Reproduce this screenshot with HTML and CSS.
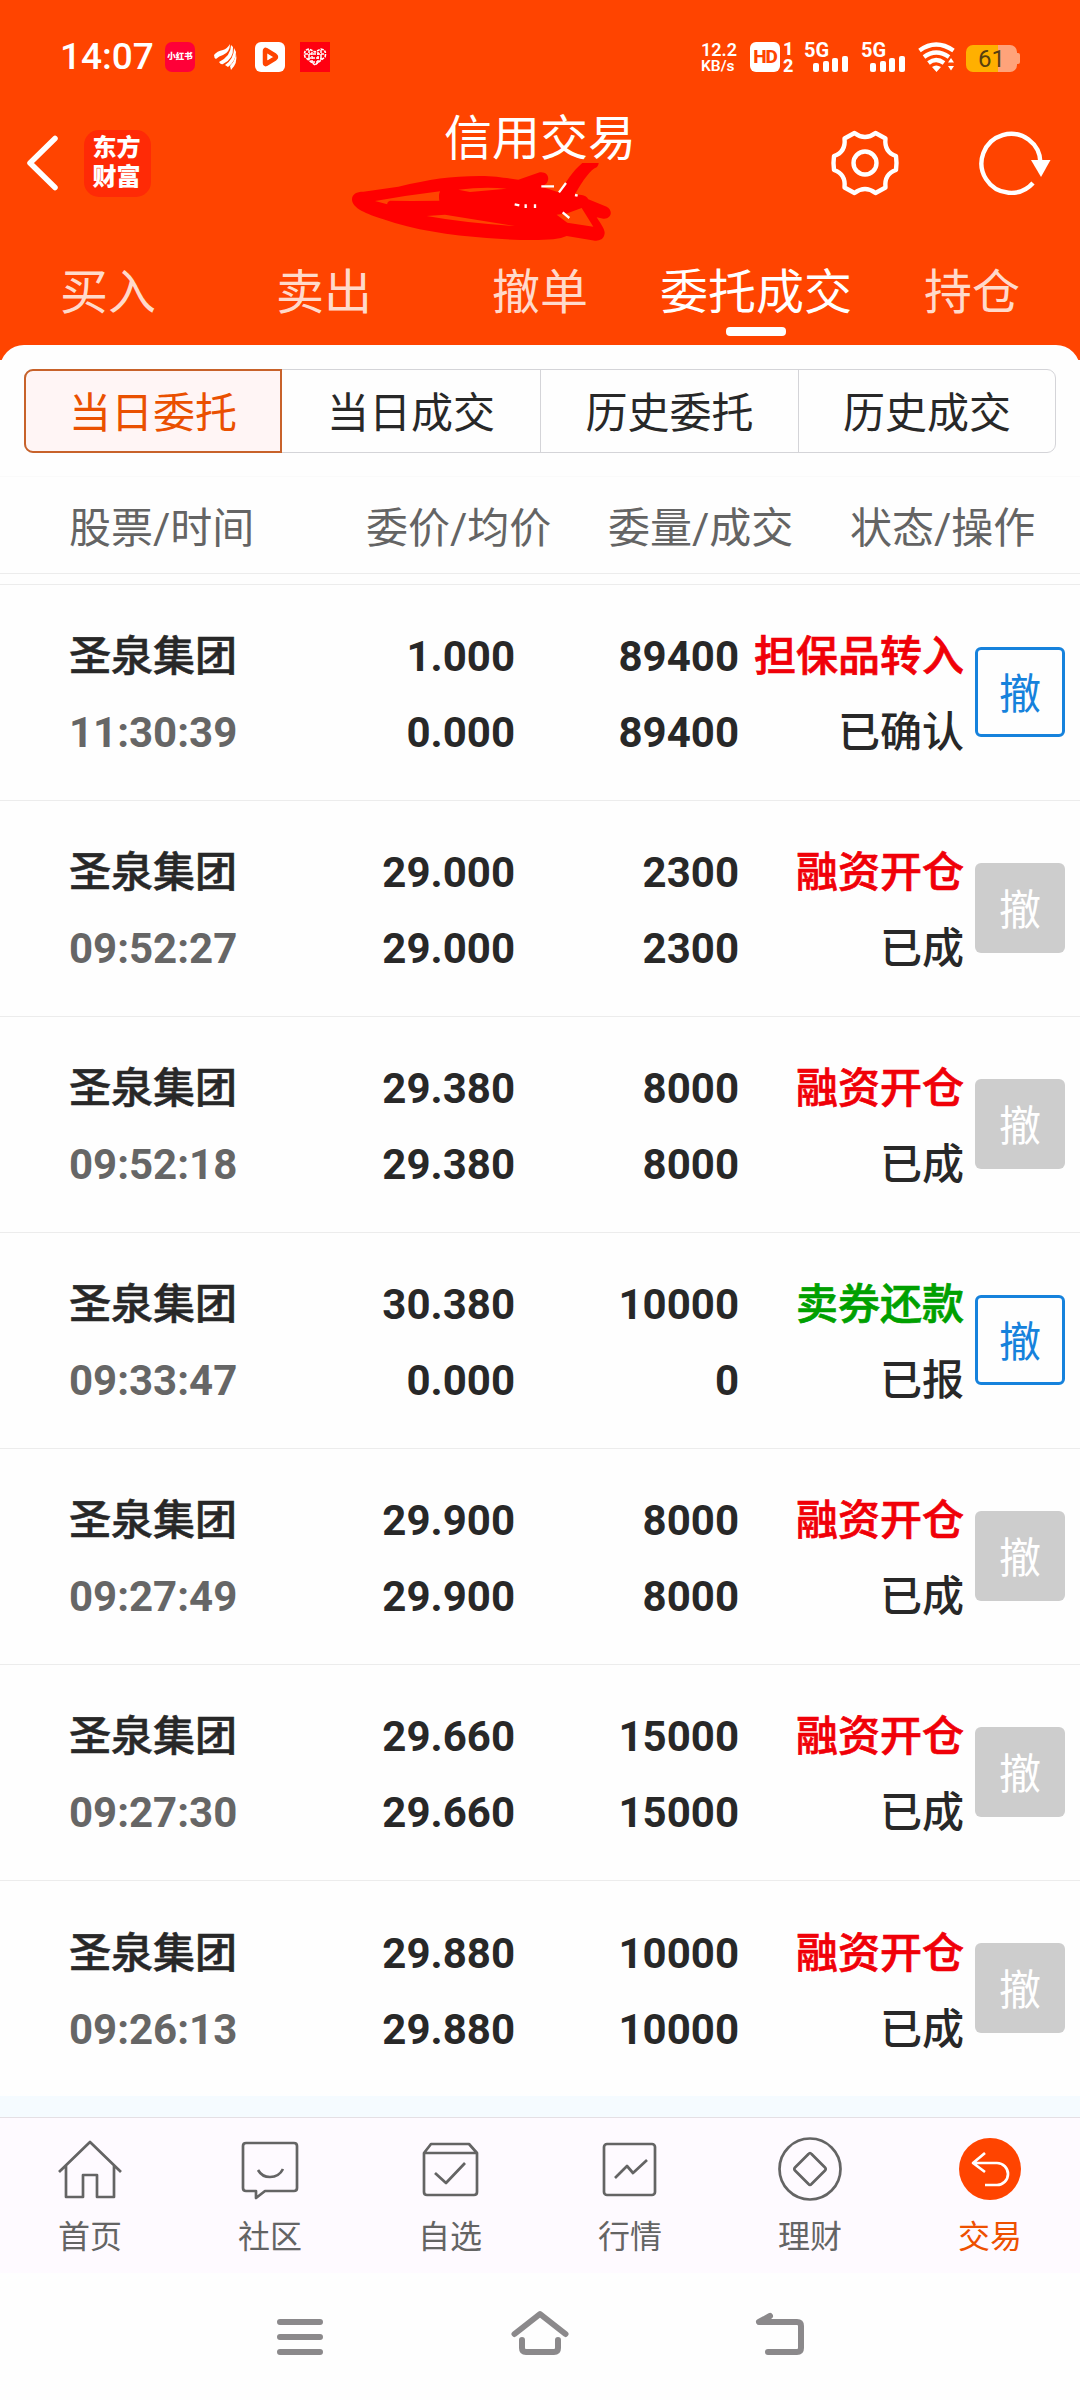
FILE: index.html
```html
<!DOCTYPE html>
<html lang="zh-CN">
<head>
<meta charset="utf-8">
<title>信用交易</title>
<link rel="stylesheet" href="styles.css">
</head>
<body>
<header class="top">
  <div class="status">
    <span class="clock">14:07</span>
    <span class="xhs">小红书</span>
    <svg class="wing" width="24" height="26" viewBox="0 0 24 26" fill="#fff"><path d="M0 11Q3 7 9 6Q13 5 16 0Q16 8 9 11Q5 12 2 15Q0 14 0 11Z"/><path d="M5 18Q17 12 17 1L19 3Q20 15 9 20Q7 21 5 18Z"/><path d="M11 21Q20 15 20 4L22 8Q22 17 14 23Z"/><path d="M16 22Q21 17 22 10Q24 19 17 26Z"/></svg>
    <svg class="play" width="30" height="30" viewBox="0 0 30 30"><rect width="30" height="30" rx="6" fill="#fff"/><path d="M10 9V21Q10 22.500 11 22L20 16.500Q22 15 20 13.500L11 8Q10 7.500 10 9Z" fill="none" stroke="#ff4400" stroke-width="4.500" stroke-linejoin="round"/></svg>
    <svg class="heart" width="30" height="30" viewBox="0 0 30 30"><rect width="30" height="30" fill="#ff0010"/><path d="M15 23L5 15Q3 8 9 7L15 10L21 7Q27 8 25 15Z" fill="none" stroke="#fff" stroke-width="1.600" stroke-dasharray="3 1"/><path d="M5 12H25M8 16H22M9 8V18M21 8V18M12 20H18M12 10V22M18 10V22" stroke="#fff" stroke-width="1.500" stroke-dasharray="3 1"/></svg>
    <span class="rate"><b>12.2</b><b>KB/s</b></span>
    <span class="hd">HD</span>
    <span class="sims"><b>1</b><b>2</b></span>
    <span class="signal"><b>5G</b><svg width="36" height="16" viewBox="0 0 36 16" fill="#fff"><rect y="7" width="6" height="9" rx="2"/><rect x="10" y="5" width="6" height="11" rx="2"/><rect x="19" y="2" width="6" height="14" rx="2"/><rect x="29" width="6" height="16" rx="2"/></svg></span>
    <span class="signal second"><b>5G</b><svg width="36" height="16" viewBox="0 0 36 16" fill="#fff"><rect y="7" width="6" height="9" rx="2"/><rect x="10" y="5" width="6" height="11" rx="2"/><rect x="19" y="2" width="6" height="14" rx="2"/><rect x="29" width="6" height="16" rx="2"/></svg></span>
    <svg class="wifi" width="37" height="30" viewBox="0 0 37 30"><path d="M1.500 8.500Q18 -3.500 35.500 8.500M6 15Q18 6 31 15M10.500 21Q18 15 26 21" fill="none" stroke="#fff" stroke-width="4.200"/><path d="M14 25Q18 22 23 25L18.500 30ZM30 20.500L33 16L36 20.500ZM30 24H36L33 28.500Z" fill="#fff"/></svg>
    <span class="battery">61</span>
  </div>
  <div class="bar">
    <svg class="back" width="34" height="60" viewBox="0 0 34 60"><path d="M30 5.500L5 30L30 54.500" fill="none" stroke="#fff" stroke-width="5.500" stroke-linecap="round" stroke-linejoin="round"/></svg>
    <span class="logo">东方<br>财富</span>
    <h1 class="title">信用交易</h1>
    <svg class="gear" width="70" height="70" viewBox="-35 -35 70 70" fill="none" stroke="#fff" stroke-width="4.400" stroke-linejoin="round"><circle r="11.500"/><path d="M-10.500 -30Q0 -22 10.500 -30L20.500 -24.500Q19 -11 31 -7Q32 0 31 7Q19 11 20.500 24.500L10.500 30Q0 22 -10.500 30L-20.500 24.500Q-19 11 -31 7Q-32 0 -31 -7Q-19 -11 -20.500 -24.500Z"/></svg>
    <svg class="refresh" width="80" height="70" viewBox="-35 -35 80 70"><path d="M29.500 0A29.500 29.500 0 1 0 22 20" fill="none" stroke="#fff" stroke-width="4.400"/><path d="M20 -3H39.500L30 14Z" fill="#fff"/></svg>
    <svg class="scribble" width="270" height="90" viewBox="39 219 810 270">
      <path fill="#f00" fill-rule="evenodd" d="M66 328C66 312 80 305 100 305L205 290C300 268 360 258 450 258C500 258 530 265 565 269L625 248C650 242 662 262 650 280L635 290L690 308C710 270 740 225 780 203C800 195 815 215 800 232C780 240 760 270 735 313L755 315Q768 316 775 328L830 350C850 360 845 388 820 386L800 382C815 405 825 420 824 430C822 450 805 453 795 452L710 438Q690 447 670 448C620 452 540 450 470 444C360 436 250 420 160 388C110 372 66 355 66 328ZM135 333L225 318L330 304Q325 315 328 332L245 333L180 332Q170 336 172 343ZM385 299Q460 290 530 296L420 306ZM290 378L345 374L555 408Q400 398 290 378ZM712 370L755 354L790 410L712 398L680 374Z"/>
      <path fill="none" stroke="#fff" stroke-width="7" d="M634 289L672 289M687 307L708 279M554 343L568 346M587 343V354M615 343V354M698 367L718 384M735 315L743 317"/>
    </svg>
  </div>
  <nav class="tabs"><span>买入</span><span>卖出</span><span>撤单</span><span class="on">委托成交</span><span>持仓</span></nav>
</header>
<main class="panel">
  <div class="segments"><span class="on">当日委托</span><span>当日成交</span><span>历史委托</span><span>历史成交</span></div>
  <div class="heads"><span>股票/时间</span><span>委价/均价</span><span>委量/成交</span><span>状态/操作</span></div>
  <section class="orders">
    <article class="row"><div class="name"><b>圣泉集团</b><i>11:30:39</i></div><div><b>1.000</b><b>0.000</b></div><div><b>89400</b><b>89400</b></div><div class="state"><b class="red">担保品转入</b><b>已确认</b></div><button class="live">撤</button></article>
    <article class="row"><div class="name"><b>圣泉集团</b><i>09:52:27</i></div><div><b>29.000</b><b>29.000</b></div><div><b>2300</b><b>2300</b></div><div class="state"><b class="red">融资开仓</b><b>已成</b></div><button>撤</button></article>
    <article class="row"><div class="name"><b>圣泉集团</b><i>09:52:18</i></div><div><b>29.380</b><b>29.380</b></div><div><b>8000</b><b>8000</b></div><div class="state"><b class="red">融资开仓</b><b>已成</b></div><button>撤</button></article>
    <article class="row"><div class="name"><b>圣泉集团</b><i>09:33:47</i></div><div><b>30.380</b><b>0.000</b></div><div><b>10000</b><b>0</b></div><div class="state"><b class="green">卖券还款</b><b>已报</b></div><button class="live">撤</button></article>
    <article class="row"><div class="name"><b>圣泉集团</b><i>09:27:49</i></div><div><b>29.900</b><b>29.900</b></div><div><b>8000</b><b>8000</b></div><div class="state"><b class="red">融资开仓</b><b>已成</b></div><button>撤</button></article>
    <article class="row"><div class="name"><b>圣泉集团</b><i>09:27:30</i></div><div><b>29.660</b><b>29.660</b></div><div><b>15000</b><b>15000</b></div><div class="state"><b class="red">融资开仓</b><b>已成</b></div><button>撤</button></article>
    <article class="row"><div class="name"><b>圣泉集团</b><i>09:26:13</i></div><div><b>29.880</b><b>29.880</b></div><div><b>10000</b><b>10000</b></div><div class="state"><b class="red">融资开仓</b><b>已成</b></div><button>撤</button></article>
  </section>
</main>
<div class="strip"></div>
<nav class="dock">
  <a><svg viewBox="-35 -35 70 70"><path d="M-31 3L0 -27L31 3M-24 -3V28H-7V6H7V28H24V-3"/></svg>首页</a>
  <a><svg viewBox="-35 -35 70 70"><path d="M-24 -26H24Q27 -26 27 -23V19Q27 22 24 22H-5L-14 29V22H-24Q-27 22 -27 19V-23Q-27 -26 -24 -26ZM-12 1Q-8 8 0 8Q9 8 13 0"/></svg>社区</a>
  <a><svg viewBox="-35 -35 70 70"><path d="M-26 -16L-19 -25H19L27 -16V23Q27 26 24 26H-23Q-26 26 -26 23ZM-26 -16H27M-15 4L-4 14L15 -6"/></svg>自选</a>
  <a><svg viewBox="-35 -35 70 70"><rect x="-26" y="-25" width="51" height="51" rx="3"/><path d="M-15 9L-3 -3L3 4L17 -9"/></svg>行情</a>
  <a><svg viewBox="-35 -35 70 70"><circle r="30.500"/><path d="M-1.500 -15Q0 -17 1.500 -15L15 -1.500Q16.500 0 15 1.500L1.500 15Q0 17 -1.500 15L-15 1.500Q-16.500 0 -15 -1.500Z"/></svg>理财</a>
  <a class="on"><svg viewBox="-35 -35 70 70"><circle r="31" fill="#ff4400" stroke="none"/><path d="M-5 -16L-17 -6L-5 3M-17 -6H7A11 11 0 0 1 7 16H-5" stroke="#fff"/></svg>交易</a>
</nav>
<footer class="system">
  <svg viewBox="-30 -30 60 60"><path d="M-20 -15H20M-20 0H20M-20 15H20"/></svg>
  <svg viewBox="-30 -30 60 60"><path d="M-25.500 -3L0 -23L25.500 -3M-18 3V11Q-18 15 -14 15H14Q18 15 18 11V3"/></svg>
  <svg viewBox="-30 -30 60 60"><path d="M-10 -21L-21 -15H17Q21 -15 21 -11V11Q21 15 17 15H-12"/></svg>
</footer>
</body>
</html>
```
FILE: styles.css
```css
* { box-sizing: border-box; }
body { margin: 0; width: 1080px; height: 2400px; overflow: hidden; background: #fefefe; color: #282828; font-family: Roboto, "Noto Sans CJK SC", sans-serif; }
svg { display: block; flex: none; }
b, i { display: block; font-style: normal; font-weight: inherit; }
.top { height: 360px; background: #ff4400; color: #fff; }
.status { display: flex; align-items: center; height: 114px; padding-left: 60px; white-space: nowrap; }
.clock { width: 105px; font-size: 37px; font-weight: 500; line-height: 40px; }
.xhs { display: flex; justify-content: center; width: 30px; height: 30px; border-radius: 7px; background: #ff0038; font-size: 8.5px; font-weight: 900; line-height: 29px; }
.wing { margin-left: 19px; }
.play { margin-left: 17px; }
.heart { margin-left: 15px; }
.rate { width: 36px; margin-left: 371px; font-size: 18px; font-weight: 600; line-height: 18px; }
.rate b + b { font-size: 15.500px; line-height: 14px; }
.hd { width: 30px; height: 30px; margin-left: 13px; border-radius: 6px; background: #fff; color: #ff4400; font-size: 19px; font-weight: 800; line-height: 30px; text-align: center; letter-spacing: -1px; }
.sims { width: 12px; margin-left: 3px; font-size: 18px; font-weight: 800; line-height: 17px; }
.signal { width: 44px; height: 30px; margin-left: 9px; font-size: 20px; font-weight: 700; line-height: 16px; }
.signal svg { margin: -2px 0 0 9px; }
.second { margin-left: 13px; }
.wifi { margin-left: 13px; }
.battery { position: relative; width: 51px; height: 27px; margin: 3px 0 0 11px; border-radius: 7px; background: linear-gradient(90deg, #ffb000 32px, #ffa37a 32px); color: #57400f; font-size: 24px; line-height: 28px; text-align: center; }
.battery::after { content: ""; position: absolute; left: 51px; top: 8px; width: 3px; height: 11px; border-radius: 0 2px 2px 0; background: #ffa37a; }
.bar { position: relative; display: flex; align-items: center; height: 98px; padding-left: 25px; }
.back { width: 34px; }
.logo { width: 67px; height: 67px; margin-left: 25px; border-radius: 15px; background: #ff2a06; font-size: 24px; font-weight: 900; line-height: 29px; padding: 4px 2px 0 0; text-align: center; }
.title { width: 200px; margin: -48px 0 0 289px; font-size: 48px; font-weight: 400; line-height: 50px; text-align: center; }
.gear { margin-left: 190px; }
.refresh { margin-left: 76px; }
.scribble { position: absolute; left: 343px; top: 49px; }
.tabs { display: flex; height: 148px; padding-top: 46px; color: #ffdacb; font-size: 48px; line-height: 70px; text-align: center; }
.tabs span { flex: 1; white-space: nowrap; }
.tabs .on { color: #fff; }
.tabs .on::after { content: ""; display: block; width: 60px; height: 9px; margin: -1px auto 0; border-radius: 4px; background: #fff; }
.panel { position: relative; height: 1751px; margin-top: -15px; padding-top: 24px; border-radius: 24px 24px 0 0; background: #fefefe; }
.segments { display: grid; grid-template: 82px / 257px 258px 258px 1fr; width: 1032px; height: 84px; margin: 0 24px; border: 1px solid #d4d4d8; border-radius: 9px; font-size: 42px; line-height: 88px; text-align: center; }
.segments span { height: 82px; border-left: 1px solid #d4d4d8; }
.segments .on { height: 84px; margin: -1px 0 -1px -1px; border: 2px solid #c8622a; border-radius: 9px 0 0 9px; background: #fff5f5; color: #ea5000; line-height: 86px; }
.segments .on + span { border-left: 0; }
.heads { display: grid; grid-template-columns: 297px 242px 242px 229px; height: 98px; margin-top: 23px; padding-left: 69px; border-top: 1px solid #fafafa; border-bottom: 1px solid #ececec; color: #646464; font-size: 42px; line-height: 104px; white-space: nowrap; }
.orders { margin-top: 10px; border-top: 1px solid #ececec; }
.row { display: grid; grid-template-columns: 167px 279px 224px 225px 90px; align-items: center; height: 216px; padding: 0 0 0 69px; border-bottom: 1px solid #ececec; font-size: 42px; font-weight: 700; line-height: 76px; text-align: right; white-space: nowrap; }
.row:last-child { border-bottom: 0; }
.row > div { padding-top: 5px; }
.name { text-align: left; }
.name i { color: #666; }
.row b { font-weight: 700; }
.name b { font-weight: 500; -webkit-text-stroke: .5px currentColor; }
.state b { font-weight: 500; }
.state .red { color: #f00008; -webkit-text-stroke: .7px currentColor; }
.state .green { color: #00a000; -webkit-text-stroke: .7px currentColor; }
.row button { width: 90px; height: 90px; margin: -2px 0 0 11px; padding: 6px 0 0; border: 0; border-radius: 6px; background: #cdcdcd; color: #fff; font: 42px/84px Roboto, "Noto Sans CJK SC", sans-serif; }
.row .live { padding: 3px 0 0; border: 3px solid #1682dc; background: #fefefe; color: #1682dc; }
.strip { height: 21px; background: #f5fbff; }
.dock { display: flex; height: 156px; border-top: 1px solid #e5e0e5; background: #fefaff; color: #646464; }
.dock a { flex: 1; padding-top: 16px; font-size: 32px; line-height: 60px; text-align: center; }
.dock svg { width: 70px; height: 70px; margin: 0 auto 3px; fill: none; stroke: #646464; stroke-width: 2.700; stroke-linejoin: round; }
.dock .on { color: #ee5000; }
.system { display: flex; justify-content: center; gap: 180px; height: 127px; padding-top: 34px; }
.system svg { width: 60px; height: 60px; fill: none; stroke: #8b898b; stroke-width: 6; stroke-linecap: round; stroke-linejoin: round; }
```
